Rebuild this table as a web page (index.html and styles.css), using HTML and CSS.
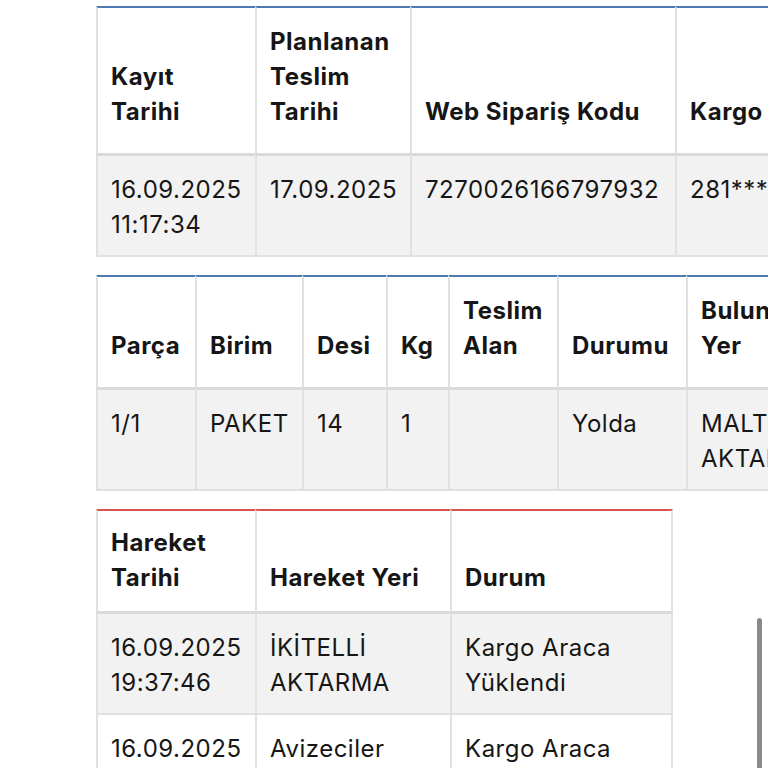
FILE: index.html
```html
<!DOCTYPE html>
<html lang="tr">
<head>
<meta charset="utf-8">
<title>Kargo Takip</title>
<link rel="stylesheet" href="styles.css">
</head>
<body>
<main class="page">
  <table class="grid grid-blue tall-head t-info">
    <colgroup>
      <col class="w159"><col class="w155"><col class="w265"><col class="w220">
    </colgroup>
    <thead>
      <tr>
        <th>Kayıt<br>Tarihi</th>
        <th>Planlanan Teslim Tarihi</th>
        <th>Web Sipariş Kodu</th>
        <th>Kargo Kodu</th>
      </tr>
    </thead>
    <tbody>
      <tr class="shade">
        <td>16.09.2025 11:17:34</td>
        <td>17.09.2025</td>
        <td>7270026166797932</td>
        <td>281*******</td>
      </tr>
    </tbody>
  </table>

  <table class="grid grid-blue tall-head t-parts">
    <colgroup>
      <col class="w99"><col class="w107"><col class="w84"><col class="w62"><col class="w109"><col class="w129"><col class="w170">
    </colgroup>
    <thead>
      <tr>
        <th>Parça</th>
        <th>Birim</th>
        <th>Desi</th>
        <th>Kg</th>
        <th>Teslim Alan</th>
        <th>Durumu</th>
        <th>Bulunduğu Yer</th>
      </tr>
    </thead>
    <tbody>
      <tr class="shade">
        <td>1/1</td>
        <td>PAKET</td>
        <td>14</td>
        <td>1</td>
        <td></td>
        <td>Yolda</td>
        <td>MALTEPE AKTARMA</td>
      </tr>
    </tbody>
  </table>

  <table class="grid grid-red closed t-moves">
    <colgroup>
      <col class="w159"><col class="w195"><col class="w223">
    </colgroup>
    <thead>
      <tr>
        <th>Hareket Tarihi</th>
        <th>Hareket Yeri</th>
        <th>Durum</th>
      </tr>
    </thead>
    <tbody>
      <tr class="shade">
        <td>16.09.2025 19:37:46</td>
        <td>İKİTELLİ AKTARMA</td>
        <td>Kargo Araca Yüklendi</td>
      </tr>
      <tr>
        <td>16.09.2025 12:05:10</td>
        <td>Avizeciler Şube</td>
        <td>Kargo Araca Yüklendi</td>
      </tr>
    </tbody>
  </table>
</main>
<div class="scroll-thumb"></div>
</body>
</html>
```

FILE: styles.css
```css
html, body {
  margin: 0;
  padding: 0;
  overflow: hidden;
  background: #ffffff;
}

body {
  font-family: Inter, "Noto Sans", "Liberation Sans", sans-serif;
  font-size: 24px;
  line-height: 35px;
  letter-spacing: 0.5px;
  color: #161616;
}

.page {
  padding: 6px 0 0 96px;
  display: flex;
  flex-direction: column;
  align-items: flex-start;
  gap: 18px;
}

.grid {
  border-collapse: separate;
  border-spacing: 0;
  table-layout: fixed;
  flex: none;
}

.t-info { width: 799px; }
.t-parts { width: 760px; }
.t-moves { width: 577px; }

.w62 { width: 62px; }
.w84 { width: 84px; }
.w99 { width: 99px; }
.w107 { width: 107px; }
.w109 { width: 109px; }
.w129 { width: 129px; }
.w155 { width: 155px; }
.w159 { width: 159px; }
.w170 { width: 170px; }
.w195 { width: 195px; }
.w220 { width: 220px; }
.w223 { width: 223px; }
.w265 { width: 265px; }

.grid th,
.grid td {
  box-sizing: border-box;
  border-left: 2px solid #e1e1e1;
  padding: 16px 8px 13px 13px;
  text-align: left;
  overflow: hidden;
}

.grid th {
  font-weight: 700;
  vertical-align: bottom;
  background: #ffffff;
  border-bottom: 3px solid #dadada;
  padding-top: 14px;
  padding-bottom: 16px;
}

.grid-blue th { border-top: 2px solid #4b7bb1; }
.grid-red th { border-top: 2px solid #d9544f; }

.tall-head th {
  padding-top: 16px;
  padding-bottom: 24px;
}

.grid td {
  font-weight: 400;
  vertical-align: top;
  border-bottom: 2px solid #e1e1e1;
}

.grid tr.shade td { background: #f2f2f2; }

.closed th:last-child,
.closed td:last-child {
  border-right: 2px solid #e1e1e1;
}

.scroll-thumb {
  position: fixed;
  left: 757px;
  top: 618px;
  width: 5px;
  height: 170px;
  border-radius: 3px;
  background: #8a8a8a;
}
```
